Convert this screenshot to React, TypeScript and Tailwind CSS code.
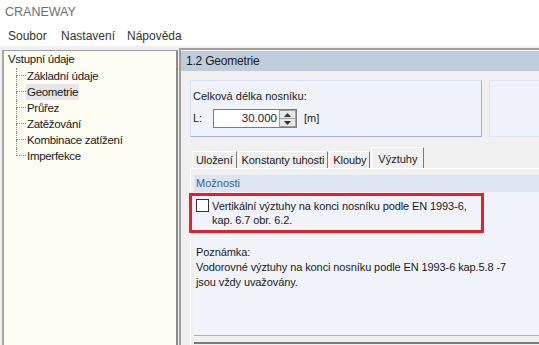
import React from "react";

const font = { fontFamily: '"Liberation Sans", Arial, sans-serif' };

const treeItems = [
    "Základní údaje",
    "Geometrie",
    "Průřez",
    "Zatěžování",
    "Kombinace zatížení",
    "Imperfekce",
];

function TreeRow({ label, last, selected }: { label: string; last: boolean; selected: boolean }) {
    return (
        <div className="flex h-[16px]">
            <div className="flex w-[10px] flex-col">
                <div className="h-[8px] border-b border-l border-dotted border-[#8a8a8a]" />
                <div className={last ? "flex-1" : "flex-1 border-l border-dotted border-[#8a8a8a]"} />
            </div>
            <span
                className={
                    "flex items-center whitespace-nowrap px-[1px] text-[11.5px] leading-[16px] tracking-[-0.3px] text-[#1a1a1a] " +
                    (selected ? "bg-[#e6e6e6]" : "")
                }
            >
                {label}
            </span>
        </div>
    );
}

function Tab({ label, active }: { label: string; active?: boolean }) {
    if (active) {
        return (
            <div className="-mb-[1px] ml-[1px] flex h-[22px] items-start border-l border-r border-t border-l-white border-r-[#7a7a7a] border-t-white bg-[#f0f0f0] px-[6px] pt-[3px] text-[11px] text-[#1a1a1a]">
                {label}
            </div>
        );
    }
    return (
        <div className="ml-[1px] mt-[4px] flex h-[17px] items-center border-l border-r border-t border-l-white border-r-[#7a7a7a] border-t-white bg-[#f0f0f0] px-[3px] text-[11px] tracking-[-0.1px] text-[#1a1a1a]">
            {label}
        </div>
    );
}

export default function App() {
    return (
        <div className="flex h-[345px] w-[539px] flex-col overflow-hidden bg-[#f0f0f0]" style={font}>
            <div className="flex h-[25px] items-center bg-white pl-[5px] text-[12.5px] text-[#6e6e6e]">
                CRANEWAY
            </div>
            <div className="flex h-[21px] items-center bg-white pl-[8px] text-[12px] text-[#333]">
                <span className="w-[53px]">Soubor</span>
                <span className="w-[66px]">Nastavení</span>
                <span>Nápověda</span>
            </div>
            <div className="flex flex-1 pt-[2px]">
                {/* tree */}
                <div className="ml-[2px] mt-[2px] w-[176px] border-l-2 border-r-2 border-t border-l-[#a8a8a8] border-r-[#8c8c8c] border-t-[#a0a0a0] bg-[#fcfcf3] pl-[4px] pt-[1px]">
                    <div className="flex h-[16px] items-center text-[11.5px] tracking-[-0.3px] text-[#1a1a1a]">Vstupní údaje</div>
                    <div className="pl-[8px]">
                        {treeItems.map((t, i) => (
                            <TreeRow key={t} label={t} last={i === treeItems.length - 1} selected={t === "Geometrie"} />
                        ))}
                    </div>
                </div>

                {/* right panel */}
                <div className="ml-[1px] flex flex-1 flex-col border-l-2 border-t-2 border-l-[#a0a0a0] border-t-[#a0a0a0]">
                    <div className="border-t border-white" />
                    <div className="flex h-[20px] items-center bg-[#bfcddb] pl-[5px] text-[12px] tracking-[-0.2px] text-[#1a1a1a]">
                        1.2 Geometrie
                    </div>
                    <div className="flex flex-1 flex-col pl-[9px] pt-[9px]">
                        <div className="flex">
                            <div className="h-[57px] w-[292px] border border-b-[#a8a8ee] border-l-[#d6e0f0] border-r-[#a8a8ee] border-t-[#d6e0f0] bg-[#eff3f9] pl-[2px] pt-[9px]">
                                <div className="text-[11px] leading-[13px] text-[#1a1a1a]">Celková délka nosníku:</div>
                                <div className="mt-[6px] flex items-center">
                                    <span className="w-[20px] text-[11px] text-[#1a1a1a]">L:</span>
                                    <div className="flex h-[19px] w-[84px] items-center border border-[#7a7a7a] bg-white">
                                        <span className="flex-1 pr-[2px] text-right text-[11.5px] text-[#1a1a1a]">30.000</span>
                                        <div className="flex h-[17px] w-[17px] flex-col border border-[#a0a0a0] bg-[#e8e8e8]">
                                            <div className="flex flex-1 items-center justify-center border-b border-[#a0a0a0]">
                                                <svg width="7" height="4" viewBox="0 0 7 4"><path d="M3.5 0L7 4H0z" fill="#333" /></svg>
                                            </div>
                                            <div className="flex flex-1 items-center justify-center">
                                                <svg width="7" height="4" viewBox="0 0 7 4"><path d="M0 0h7L3.5 4z" fill="#333" /></svg>
                                            </div>
                                        </div>
                                    </div>
                                    <span className="ml-[7px] text-[11px] text-[#1a1a1a]">[m]</span>
                                </div>
                            </div>
                            <div className="ml-[7px] h-[57px] flex-1 border border-r-0 border-[#dde4f2] bg-[#eff3f9]" />
                        </div>

                        {/* tabs */}
                        <div className="ml-[1px] mt-[10px] flex items-end">
                            <Tab label="Uložení" />
                            <Tab label="Konstanty tuhosti" />
                            <Tab label="Klouby" />
                            <Tab label="Výztuhy" active />
                        </div>
                        <div className="flex flex-1 flex-col border-l border-t border-white pl-[3px] pt-[6px]">
                            <div className="flex h-[161px] flex-col border-b border-[#a8a8ee] bg-[#f0f4fa]">
                                <div className="flex h-[17px] items-center bg-[#dbe5f3] pl-[2px] text-[11px] text-[#3d5f95]">
                                    Možnosti
                                </div>
                                <div className="-ml-[5px] mt-[1px] flex h-[40px] w-[295px] items-start border-[3px] border-[#e5202c] pl-[4px] pt-[3px]">
                                    <div className="h-[13px] w-[13px] shrink-0 border border-[#333] bg-white" />
                                    <div className="ml-[3px] whitespace-nowrap text-[11px] leading-[14px] tracking-[-0.1px] text-[#1a1a1a]">
                                        Vertikální výztuhy na konci nosníku podle EN 1993-6,
                                        <br />
                                        kap. 6.7 obr. 6.2.
                                    </div>
                                </div>
                                <div className="mt-[12px] whitespace-nowrap pl-[2px] text-[11px] leading-[15px] tracking-[-0.1px] text-[#1a1a1a]">
                                    Poznámka:
                                    <br />
                                    Vodorovné výztuhy na konci nosníku podle EN 1993-6 kap.5.8 -7
                                    <br />
                                    jsou vždy uvažovány.
                                </div>
                            </div>
                            <div className="mt-[6px] border-b-2 border-[#7a7a7a]" />
                        </div>
                    </div>
                </div>
            </div>
        </div>
    );
}
